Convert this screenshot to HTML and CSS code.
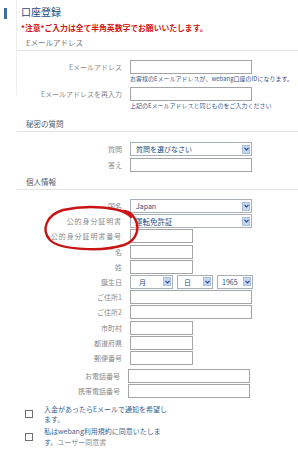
FILE: index.html
```html
<!DOCTYPE html>
<html lang="ja">

<head>
  <meta charset="UTF-8">
  <meta name="viewport" content="width=device-width, initial-scale=1">
  <title>口座登録</title>
  <link rel="stylesheet" href="styles.css">
</head>

<body>
  <div class="page">
    <div class="rail"><span class="rail-mark"></span></div>
    <main class="content">
      <h1 class="title">口座登録</h1>
      <p class="notice">*注意*ご入力は全て半角英数字でお願いいたします。</p>

      <h2 class="section-title section-email">Eメールアドレス</h2>
      <div class="field field-first">
        <label class="field-label">Eメールアドレス</label>
        <input type="text" class="input">
      </div>
      <p class="hint">お客様のEメールアドレスが、webang口座のIDになります。</p>
      <div class="field field-spaced">
        <label class="field-label">Eメールアドレスを再入力</label>
        <input type="text" class="input">
      </div>
      <p class="hint">上記のEメールアドレスと同じものをご入力ください</p>

      <h2 class="section-title section-secret">秘密の質問</h2>
      <div class="group group-secret">
        <div class="field">
          <label class="field-label">質問</label>
          <div class="select"><span>質問を選びなさい</span><span class="select-arrow"><svg viewBox="0 0 6 4" width="5" height="4"><path d="M0.6 0.8 L3 3.2 L5.4 0.8" fill="none" stroke="#23508a" stroke-width="1.3"/></svg></span></div>
        </div>
        <div class="field">
          <label class="field-label">答え</label>
          <input type="text" class="input">
        </div>
      </div>

      <h2 class="section-title section-personal">個人情報</h2>
      <div class="group group-personal">
        <div class="field">
          <label class="field-label">国名</label>
          <div class="select"><span>Japan</span><span class="select-arrow"><svg viewBox="0 0 6 4" width="5" height="4"><path d="M0.6 0.8 L3 3.2 L5.4 0.8" fill="none" stroke="#23508a" stroke-width="1.3"/></svg></span></div>
        </div>
        <div class="field">
          <label class="field-label field-label-wide">公的身分証明書</label>
          <div class="select select-id"><span>運転免許証</span><span class="select-arrow"><svg viewBox="0 0 6 4" width="5" height="4"><path d="M0.6 0.8 L3 3.2 L5.4 0.8" fill="none" stroke="#23508a" stroke-width="1.3"/></svg></span></div>
        </div>
        <div class="field">
          <label class="field-label field-label-wide">公的身分証明書番号</label>
          <input type="text" class="input input-short">
        </div>
        <div class="field">
          <label class="field-label">名</label>
          <input type="text" class="input input-short">
        </div>
        <div class="field">
          <label class="field-label">姓</label>
          <input type="text" class="input input-short">
        </div>
        <div class="field">
          <label class="field-label">誕生日</label>
          <div class="birth">
            <div class="select select-month"><span>月</span><span class="select-arrow"><svg viewBox="0 0 6 4" width="5" height="4"><path d="M0.6 0.8 L3 3.2 L5.4 0.8" fill="none" stroke="#23508a" stroke-width="1.3"/></svg></span></div>
            <div class="select select-day"><span>日</span><span class="select-arrow"><svg viewBox="0 0 6 4" width="5" height="4"><path d="M0.6 0.8 L3 3.2 L5.4 0.8" fill="none" stroke="#23508a" stroke-width="1.3"/></svg></span></div>
            <div class="select select-year"><span>1965</span><span class="select-arrow"><svg viewBox="0 0 6 4" width="5" height="4"><path d="M0.6 0.8 L3 3.2 L5.4 0.8" fill="none" stroke="#23508a" stroke-width="1.3"/></svg></span></div>
          </div>
        </div>
        <div class="field">
          <label class="field-label">ご住所1</label>
          <input type="text" class="input">
        </div>
        <div class="field">
          <label class="field-label">ご住所2</label>
          <input type="text" class="input">
        </div>
        <div class="field">
          <label class="field-label">市町村</label>
          <input type="text" class="input input-short">
        </div>
        <div class="field">
          <label class="field-label">都道府県</label>
          <input type="text" class="input input-short">
        </div>
        <div class="field">
          <label class="field-label">郵便番号</label>
          <input type="text" class="input input-short">
        </div>
      </div>

      <div class="group group-phone">
        <div class="field">
          <label class="field-label">お電話番号</label>
          <input type="text" class="input">
        </div>
        <div class="field">
          <label class="field-label">携帯電話番号</label>
          <input type="text" class="input">
        </div>
      </div>

      <div class="checks">
        <label class="check">
          <span class="check-box"></span>
          <span class="check-text">入金があったらEメールで通知を希望します。</span>
        </label>
        <label class="check">
          <span class="check-box"></span>
          <span class="check-text">私はwebang利用規約に同意いたします。<span class="check-link">ユーザー同意書</span></span>
        </label>
      </div>
    </main>

    <svg class="circle-mark" width="298" height="450" viewBox="0 0 298 450">
      <path d="M131 217 C121 206 86 205 63 210 C46 215 41 230 50 240 C60 250 102 252 124 245 C138 240 141 226 133 216 C130 212 126 211 122 211"
        fill="none" stroke="#c81414" stroke-width="2.4" stroke-linecap="round"/>
    </svg>
  </div>
</body>

</html>
```

FILE: styles.css
```css
:root {
  --label: #8a8a8a;
  --border: #a4a4a4;
  --blue-text: #1f4f80;
}

* {
  box-sizing: border-box;
}

body {
  margin: 0;
  font-family: "Noto Sans CJK JP", sans-serif;
  background: #fff;
  color: var(--label);
}

.page {
  display: flex;
  position: relative;
  min-height: 450px;
}

.rail {
  flex: none;
  width: 17px;
  height: 95px;
  border-right: 1px solid #eeeeee;
}

.rail-mark {
  display: block;
  width: 3px;
  height: 11px;
  margin: 8px 0 0 4px;
  background: #3d6fa3;
}

.content {
  flex: 1;
  padding-top: 5px;
}

.title {
  margin: 0;
  padding-left: 4px;
  font-size: 10px;
  line-height: 14px;
  font-weight: normal;
  color: #1e4c7c;
}

.notice {
  margin: 3px 0 0;
  padding-left: 4px;
  font-size: 7.8px;
  line-height: 12px;
  font-weight: bold;
  color: #d31212;
}

.section-title {
  margin: 2px 0 0;
  padding: 0 0 1px 9px;
  font-size: 7.5px;
  line-height: 13px;
  font-weight: normal;
  color: #4e5f74;
  border-bottom: 1px solid #e4e4e4;
}

.section-email {
  color: #777;
}

.section-secret {
  margin-top: 7px;
}

.section-personal {
  margin-top: 3px;
}

.field {
  display: flex;
  align-items: center;
  gap: 8px;
}

.field-label {
  flex: none;
  width: 105px;
  text-align: right;
  font-size: 7px;
  line-height: 14px;
  color: var(--label);
  white-space: nowrap;
}

.field-label-wide {
  letter-spacing: 0.9px;
}

.field-first {
  margin-top: 9px;
}

.field-spaced {
  margin-top: 4px;
}

.input {
  width: 122px;
  height: 14px;
  margin: 0;
  padding: 0;
  border: 1px solid var(--border);
  background: #fff;
}

.input-short {
  width: 63px;
}

.hint {
  margin: 1px 0 0 113px;
  font-size: 6px;
  line-height: 8px;
  color: #34598a;
  white-space: nowrap;
}

.group {
  display: flex;
  flex-direction: column;
}

.group-secret {
  margin-top: 10px;
  gap: 2px;
}

.group-personal {
  margin-top: 9px;
  gap: 1.2px;
}

.group-phone {
  margin-top: 4px;
  gap: 1px;
}

.group-phone .field-label {
  width: 103px;
}

.select {
  display: flex;
  align-items: center;
  width: 122px;
  height: 14px;
  padding-left: 5px;
  border: 1px solid #a9b0b8;
  font-size: 7px;
  color: var(--blue-text);
}

.select-id {
  padding-left: 4px;
  font-size: 7.5px;
}

.select-arrow {
  display: flex;
  align-items: center;
  justify-content: center;
  width: 8px;
  height: 9px;
  margin-left: auto;
  margin-right: 1px;
  background: #c8d7ef;
  border: 1px solid #a9bddc;
}

.birth {
  display: flex;
  gap: 4px;
}

.select-month {
  width: 43px;
  padding-left: 8px;
}

.select-day {
  width: 36px;
  padding-left: 6px;
}

.select-year {
  width: 36px;
  padding-left: 4px;
}

.checks {
  display: flex;
  flex-direction: column;
  gap: 2px;
  margin-top: 6px;
}

.check {
  display: flex;
  align-items: center;
  gap: 11px;
  padding-left: 8px;
}

.check-box {
  flex: none;
  width: 8px;
  height: 8px;
  border: 1px solid #6f6f6f;
  background: #fff;
}

.check-text {
  width: 124px;
  font-size: 7px;
  line-height: 10.3px;
  color: #3a6390;
}

.check-link {
  color: #8a8a8a;
}

.circle-mark {
  position: absolute;
  left: 0;
  top: 0;
  pointer-events: none;
}
```
